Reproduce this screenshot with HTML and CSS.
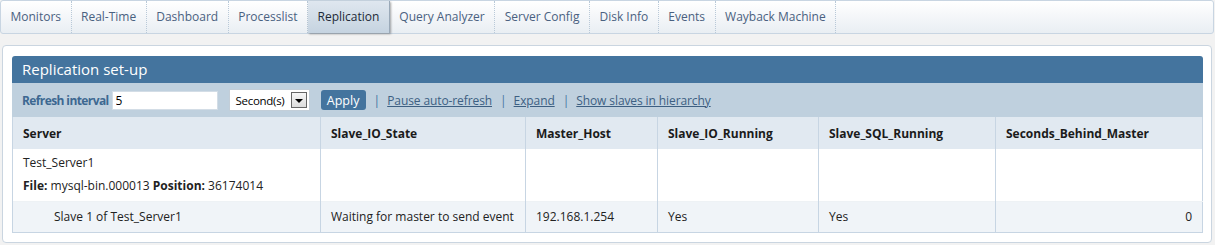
FILE: index.html
```html
<!DOCTYPE html>
<html lang="en">
<head>
    <meta charset="UTF-8">
    <title>Replication</title>
    <link rel="stylesheet" href="styles.css">
</head>
<body>
    <ul class="tabs">
        <li>Monitors</li>
        <li>Real-Time</li>
        <li>Dashboard</li>
        <li>Processlist</li>
        <li class="active">Replication</li>
        <li>Query Analyzer</li>
        <li>Server Config</li>
        <li>Disk Info</li>
        <li>Events</li>
        <li>Wayback Machine</li>
    </ul>

    <div class="panel">
        <div class="panel-head">Replication set-up</div>
        <div class="toolbar">
            <label class="tb-label" for="interval">Refresh interval</label>
            <input type="text" id="interval" class="tb-input" value="5">
            <div class="tb-select">
                <span>Second(s)</span>
                <span class="arrow"><i></i></span>
            </div>
            <button class="btn-apply">Apply</button>
            <span class="sep">|</span>
            <a href="#" class="tb-link">Pause auto-refresh</a>
            <span class="sep">|</span>
            <a href="#" class="tb-link">Expand</a>
            <span class="sep">|</span>
            <a href="#" class="tb-link">Show slaves in hierarchy</a>
        </div>
        <table class="grid">
            <thead>
                <tr>
                    <th class="c-server">Server</th>
                    <th class="c-state">Slave_IO_State</th>
                    <th class="c-host">Master_Host</th>
                    <th class="c-io">Slave_IO_Running</th>
                    <th class="c-sql">Slave_SQL_Running</th>
                    <th class="c-sec">Seconds_Behind_Master</th>
                </tr>
            </thead>
            <tbody>
                <tr class="master">
                    <td>
                        <div class="srv-name">Test_Server1</div>
                        <div class="srv-file"><b>File:</b> mysql-bin.000013 <b>Position:</b> 36174014</div>
                    </td>
                    <td></td>
                    <td></td>
                    <td></td>
                    <td></td>
                    <td></td>
                </tr>
                <tr class="slave">
                    <td class="indent">Slave 1 of Test_Server1</td>
                    <td>Waiting for master to send event</td>
                    <td>192.168.1.254</td>
                    <td>Yes</td>
                    <td>Yes</td>
                    <td class="num">0</td>
                </tr>
            </tbody>
        </table>
    </div>
</body>
</html>
```
FILE: styles.css
```css
* {
    margin: 0;
    padding: 0;
    box-sizing: border-box;
}

body {
    font-family: 'Open Sans', 'Noto Sans', sans-serif;
    font-size: 12px;
    background: #f2f2f2;
    color: #222;
    width: 1215px;
    height: 245px;
    overflow: hidden;
}

/* tab bar */
.tabs {
    list-style: none;
    display: flex;
    width: 1214px;
    height: 34px;
    border: 1px solid #c8d5e2;
    border-radius: 3px;
    background: linear-gradient(#ffffff, #e9eef3);
}

.tabs li {
    padding: 0 9.5px;
    line-height: 31px;
    color: #4a6180;
    border-right: 1px dotted #b9c9d8;
    white-space: nowrap;
}

.tabs li.active {
    color: #1e2a38;
    background: linear-gradient(#dfe7ef, #c5d3e0);
    border-right: 1px solid #9aa9b8;
    box-shadow: 1px 1px 2px rgba(0, 0, 0, 0.35);
}

/* panel */
.panel {
    margin: 11px 3px 0 2px;
    height: 198px;
    background: #fff;
    border: 1px solid #cad5e0;
    border-radius: 4px;
    padding: 10px 8px 0 9px;
}

.panel-head {
    height: 27px;
    line-height: 26px;
    padding-left: 10px;
    background: #44749e;
    color: #fff;
    font-size: 15px;
    border-radius: 3px 3px 0 0;
}

.toolbar {
    height: 34px;
    background: #bfd0de;
    display: flex;
    align-items: center;
    padding-left: 10px;
    color: #3d6891;
}

.tb-label {
    font-weight: bold;
    letter-spacing: -0.6px;
    margin-right: 3px;
}

.tb-input {
    width: 106px;
    height: 19px;
    border: 1px solid #d3dde6;
    font: inherit;
    color: #000;
    padding-left: 3px;
    outline: none;
}

.tb-select {
    margin-left: 11px;
    width: 81px;
    height: 22px;
    background: #fff;
    border: 1px solid #c3ced8;
    display: flex;
    align-items: center;
    justify-content: space-between;
    padding: 0 2px 0 6px;
    color: #000;
    font-size: 11.5px;
    letter-spacing: -0.3px;
}

.tb-select .arrow {
    width: 16px;
    height: 16px;
    border: 1px solid #666;
    background: linear-gradient(#f6f6f6, #dcdcdc);
    display: flex;
    align-items: center;
    justify-content: center;
}

.tb-select .arrow i {
    border-left: 4px solid transparent;
    border-right: 4px solid transparent;
    border-top: 4px solid #000;
    margin-top: 2px;
}

.btn-apply {
    margin-left: 11px;
    width: 45px;
    height: 20px;
    background: #44749e;
    color: #fff;
    border: none;
    border-radius: 3px;
    font: inherit;
    font-size: 12.5px;
}

.sep {
    color: #44749e;
    margin: 0 7px 0 8px;
}

.tb-link {
    color: #3d5f82;
    text-decoration: underline;
    letter-spacing: -0.1px;
}

/* table */
.grid {
    width: 100%;
    border-collapse: collapse;
    border: 1px solid #c7d5e3;
    border-top: none;
}

.grid th,
.grid td {
    border-left: 1px solid #c7d5e3;
    text-align: left;
    padding: 0 10px;
    vertical-align: middle;
}

.grid th {
    height: 32px;
    background: #e1e9f1;
    font-weight: bold;
    color: #1b1b1b;
}

.c-server { width: 308px; }
.c-state { width: 205px; }
.c-host { width: 132px; }
.c-io { width: 161px; }
.c-sql { width: 177px; }

.master td {
    height: 52px;
    background: #fff;
}

.srv-name {
    line-height: 22px;
}

.srv-file {
    line-height: 24px;
}

.slave td {
    height: 31px;
    background: #f0f4f8;
    border-top: 1px solid #eef2f5;
}

.slave td.indent {
    padding-left: 41px;
}

.slave td.num {
    text-align: right;
}
```
